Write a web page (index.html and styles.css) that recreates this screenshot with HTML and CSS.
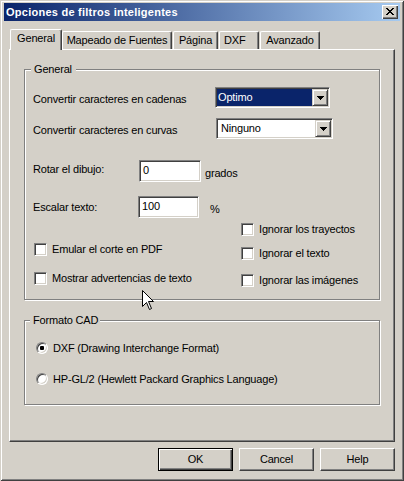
FILE: index.html
```html
<!DOCTYPE html>
<html lang="es">
<head>
<meta charset="utf-8">
<title>Opciones de filtros inteligentes</title>
<link rel="stylesheet" href="styles.css">
</head>
<body>
<div class="window">
  <div class="titlebar">
    <span class="title">Opciones de filtros inteligentes</span>
    <div class="close">
      <svg width="16" height="14" viewBox="0 0 16 14"><path fill="#000" d="M4 3h2v1H4z M10 3h2v1h-2z M5 4h2v1H5z M9 4h2v1H9z M6 5h4v1H6z M7 6h2v1H7z M6 7h4v1H6z M5 8h2v1H5z M9 8h2v1H9z M4 9h2v1H4z M10 9h2v1h-2z"/></svg>
    </div>
  </div>
  <div class="body">
    <div class="tabs">
      <div class="tab sel t1">General</div>
      <div class="tab t2">Mapeado de Fuentes</div>
      <div class="tab t3">Página</div>
      <div class="tab t4">DXF</div>
      <div class="tab t5">Avanzado</div>
    </div>
    <div class="panel">
      <div class="group g1">
        <div class="legend lg1">General</div>
        <div class="row r1">
          <span class="lbl l1">Convertir caracteres en cadenas</span>
          <div class="combo c1">
            <span class="val hl">Optimo</span>
            <span class="ddbtn"><svg width="7" height="4" viewBox="0 0 7 4"><path fill="#000" d="M0 0h7v1H0z M1 1h5v1H1z M2 2h3v1H2z M3 3h1v1H3z"/></svg></span>
          </div>
        </div>
        <div class="row r2">
          <span class="lbl l2">Convertir caracteres en curvas</span>
          <div class="combo c2">
            <span class="val">Ninguno</span>
            <span class="ddbtn"><svg width="7" height="4" viewBox="0 0 7 4"><path fill="#000" d="M0 0h7v1H0z M1 1h5v1H1z M2 2h3v1H2z M3 3h1v1H3z"/></svg></span>
          </div>
        </div>
        <div class="row r3">
          <span class="lbl l3">Rotar el dibujo:</span>
          <div class="field f1">0</div>
          <span class="unit u1">grados</span>
        </div>
        <div class="row r4">
          <span class="lbl l4">Escalar texto:</span>
          <div class="field f2">100</div>
          <span class="unit u2">%</span>
        </div>
        <div class="checks">
          <div class="col left">
            <div class="chk k1"><span class="box"></span><span>Emular el corte en PDF</span></div>
            <div class="chk k2"><span class="box"></span><span>Mostrar advertencias de texto</span></div>
          </div>
          <div class="col right">
            <div class="chk k3"><span class="box"></span><span>Ignorar los trayectos</span></div>
            <div class="chk k4"><span class="box"></span><span>Ignorar el texto</span></div>
            <div class="chk k5"><span class="box"></span><span>Ignorar las imágenes</span></div>
          </div>
        </div>
      </div>
      <div class="group g2">
        <div class="legend lg2">Formato CAD</div>
        <div class="radio o1"><span class="dot on"></span><span>DXF (Drawing Interchange Format)</span></div>
        <div class="radio o2"><span class="dot"></span><span>HP-GL/2 (Hewlett Packard Graphics Language)</span></div>
      </div>
    </div>
    <div class="buttons">
      <div class="btn default">OK</div>
      <div class="btn">Cancel</div>
      <div class="btn">Help</div>
    </div>
  </div>
  <svg class="cursor" width="13" height="21" viewBox="0 0 13 21"><path d="M0.5 0.5 V16.5 L4.5 12.5 L7.5 19.5 L9.5 18.5 L6.5 11.5 H11.5 Z" fill="#fff" stroke="#000" stroke-width="1"/></svg>
</div>
</body>
</html>
```
FILE: styles.css
```css
* { box-sizing: border-box; margin: 0; padding: 0; }
html, body { width: 404px; height: 481px; overflow: hidden; background: #d4d0c8; }
body {
  font-family: "Liberation Sans", Arial, sans-serif;
  font-size: 11px;
  line-height: 13px;
  letter-spacing: -0.18px;
  color: #000;
}
.window {
  position: relative;
  width: 404px;
  height: 481px;
  background: #d4d0c8;
  padding: 3px 4px 4px 4px;
  box-shadow: inset 1px 1px #d4d0c8, inset -1px -1px #404040, inset 2px 2px #fff, inset -2px -2px #808080;
}
.titlebar {
  height: 18px;
  display: flex;
  align-items: center;
  justify-content: space-between;
  padding: 0 2px;
  background: linear-gradient(to right, #0a246a, #a6caf0);
}
.title {
  color: #fff;
  font-weight: bold;
  letter-spacing: 0.25px;
  line-height: 18px;
}
.close {
  width: 16px;
  height: 14px;
  background: #d4d0c8;
  box-shadow: inset 1px 1px #fff, inset -1px -1px #404040, inset -2px -2px #808080;
}
.close svg { display: block; }
.body { padding: 0 5px; }
.tabs {
  display: flex;
  align-items: flex-end;
  height: 20px;
  margin: 8px 0 0 1px;
  position: relative;
  z-index: 1;
}
.tab {
  height: 18px;
  border-top: 1px solid #fff;
  border-left: 1px solid #fff;
  border-right: 1px solid #404040;
  border-top-left-radius: 2px;
  border-top-right-radius: 2px;
  box-shadow: inset -1px 0 #808080;
  background: #d4d0c8;
  text-align: center;
  padding-top: 2px;
  white-space: nowrap;
}
.tab.sel { height: 21px; margin-bottom: -1px; padding-top: 2px; }
.t1 { width: 52px; }
.t2 { width: 110px; }
.t3 { width: 45px; margin-left: 1px; }
.t4 { width: 40px; margin-left: 1px; text-align: left; padding-left: 4px; }
.t5 { width: 60px; margin-left: 1px; }
.panel {
  height: 393px;
  border: 1px solid;
  border-color: #fff #404040 #404040 #fff;
  box-shadow: inset -1px -1px #808080;
  padding: 19px 0 0 14px;
}
.group {
  width: 356px;
  border: 1px solid #808080;
  box-shadow: inset 1px 1px #fff, 1px 1px #fff;
}
.g1 { height: 231px; }
.g2 { height: 85px; margin-top: 20px; }
.legend {
  width: max-content;
  background: #d4d0c8;
  margin-top: -7px;
  white-space: nowrap;
}
.lg1 { margin-left: 6px; padding: 0 4px 0 3px; }
.lg2 { margin-left: 5px; padding: 0 2px 0 3px; }
.row {
  display: flex;
  align-items: center;
  padding-left: 8px;
  white-space: nowrap;
}
.r1 { height: 21px; margin-top: 11px; }
.r2 { height: 21px; margin-top: 10px; }
.r3 { height: 22px; margin-top: 21px; }
.r4 { height: 22px; margin-top: 14px; }
.lbl { flex: none; }
.l1 { width: 182px; padding-top: 4px; }
.l2 { width: 183px; padding-top: 3px; }
.l3 { width: 106px; margin-top: -3px; }
.l4 { width: 105px; }
.sunken {
  border: 1px solid;
}
.combo, .field {
  border: 1px solid;
  border-color: #808080 #fff #fff #808080;
  box-shadow: inset 1px 1px #404040, inset -1px -1px #d4d0c8;
  background: #fff;
}
.combo {
  height: 21px;
  display: flex;
  padding: 1px;
}
.c1 { width: 115px; }
.c2 { width: 117px; }
.val {
  flex: 1;
  line-height: 17px;
  padding-left: 3px;
}
.val.hl { background: #0a246a; color: #fff; padding-left: 1px; }
.ddbtn {
  width: 16px;
  height: 17px;
  flex: none;
  display: flex;
  align-items: center;
  justify-content: center;
  background: #d4d0c8;
  border: 1px solid;
  border-color: #d4d0c8 #404040 #404040 #d4d0c8;
  box-shadow: inset 1px 1px #fff, inset -1px -1px #808080;
}
.ddbtn svg { display: block; margin-top: 1px; }
.field {
  height: 22px;
  padding: 2px 0 0 3px;
  line-height: 15px;
}
.f1 { width: 62px; }
.f2 { width: 61px; }
.unit { margin-top: 5px; }
.u1 { margin-left: 4px; }
.u2 { margin-left: 11px; }
.checks { display: flex; }
.col { display: flex; flex-direction: column; }
.left { width: 216px; padding-left: 9px; }
.chk {
  display: flex;
  align-items: center;
  gap: 5px;
  height: 13px;
  white-space: nowrap;
}
.box {
  width: 13px;
  height: 13px;
  flex: none;
  background: #fff;
  border: 1px solid;
  border-color: #808080 #fff #fff #808080;
  box-shadow: inset 1px 1px #404040, inset -1px -1px #d4d0c8;
}
.k1 { margin-top: 25px; }
.k2 { margin-top: 16px; }
.k3 { margin-top: 5px; }
.k4 { margin-top: 11px; }
.k5 { margin-top: 14px; }
.radio {
  display: flex;
  align-items: center;
  gap: 5px;
  height: 12px;
  padding-left: 11px;
  white-space: nowrap;
}
.o1 { margin-top: 15px; }
.o2 { margin-top: 19px; }
.dot {
  width: 12px;
  height: 12px;
  flex: none;
  border-radius: 50%;
  background: #fff;
  border: 1px solid;
  border-color: #808080 #fff #fff #808080;
  box-shadow: inset 1px 1px #404040, inset -1px -1px #d4d0c8;
  display: flex;
  align-items: center;
  justify-content: center;
}
.dot.on::after {
  content: "";
  width: 4px;
  height: 4px;
  border-radius: 1px;
  background: #000;
}
.buttons {
  display: flex;
  justify-content: flex-end;
  gap: 6px;
  margin-top: 6px;
}
.btn {
  width: 75px;
  height: 23px;
  display: flex;
  align-items: center;
  justify-content: center;
  padding-bottom: 1px;
  border: 1px solid;
  border-color: #fff #404040 #404040 #fff;
  box-shadow: inset -1px -1px #808080;
}
.btn.default {
  border-color: #000;
  box-shadow: inset 1px 1px #fff, inset -1px -1px #404040, inset -2px -2px #808080;
}
.cursor {
  position: absolute;
  left: 142px;
  top: 290px;
}
```
